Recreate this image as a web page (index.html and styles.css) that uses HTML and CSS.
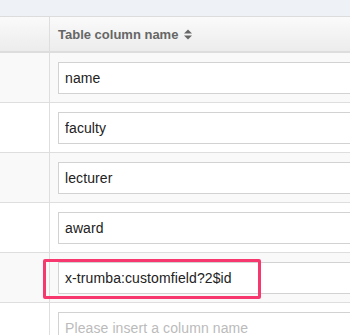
FILE: index.html
```html
<!DOCTYPE html>
<html lang="en">
<head>
  <meta charset="UTF-8">
  <meta name="viewport" content="width=device-width, initial-scale=1.0">
  <title>Column mapping</title>
  <link rel="stylesheet" href="styles.css">
</head>
<body>
  <div class="topbar"></div>
  <div class="wrap">
    <table class="mapping">
      <thead>
        <tr>
          <th class="col-index"></th>
          <th class="col-name">Table column name
            <svg class="sort" width="8" height="11" viewBox="0 0 8 11"><path d="M0 4.6 L4 0.6 L8 4.6 Z M0 6.4 L8 6.4 L4 10.4 Z" fill="#666"/></svg>
          </th>
        </tr>
      </thead>
      <tbody>
        <tr><td></td><td><input type="text" value="name"></td></tr>
        <tr><td></td><td><input type="text" value="faculty"></td></tr>
        <tr><td></td><td><input type="text" value="lecturer"></td></tr>
        <tr><td></td><td><input type="text" value="award"></td></tr>
        <tr><td></td><td><input type="text" value="x-trumba:customfield?2$id"></td></tr>
        <tr><td></td><td><input type="text" placeholder="Please insert a column name"></td></tr>
      </tbody>
    </table>
    <!-- highlight annotation -->
    <div class="highlight"></div>
  </div>
</body>
</html>
```

FILE: styles.css
```css
body {
  margin: 0;
  font-family: "Liberation Sans", Arial, sans-serif;
  background: #fff;
  overflow: hidden;
  width: 350px;
  height: 335px;
}

.topbar {
  height: 16px;
  background: #eef1f6;
  border-bottom: 1px solid #dcdcdc;
}

.wrap {
  position: relative;
}

.mapping {
  border-collapse: collapse;
  width: 520px;
}

.mapping th {
  height: 34px;
  padding: 0 8px;
  text-align: left;
  font-size: 13px;
  font-weight: bold;
  color: #666;
  background: linear-gradient(#fafafa, #ececec);
  border-bottom: 2px solid #dddddd;
}

.mapping .col-index {
  width: 33px;
  border-right: 1px solid #dedede;
}

.sort {
  vertical-align: -1px;
  margin-left: 2px;
}

.mapping td {
  padding: 9px 8px 8px;
  border-bottom: 1px solid #dedede;
}

.mapping td:first-child {
  border-right: 1px solid #dedede;
}

.mapping tbody tr:nth-child(odd) {
  background: #f9f9f9;
}

.mapping input {
  display: block;
  box-sizing: border-box;
  width: 100%;
  height: 32px;
  margin: 0;
  padding: 0 6px;
  font-family: "Liberation Sans", Arial, sans-serif;
  font-size: 14px;
  letter-spacing: 0.1px;
  color: #222;
  background: #fff;
  border: 1px solid #d2d2d2;
  border-radius: 0;
  outline: none;
}

.mapping input::placeholder {
  color: #bbb;
}

.highlight {
  position: absolute;
  left: 43px;
  top: 242px;
  width: 218px;
  height: 40px;
  box-sizing: border-box;
  border: 3px solid #f7386f;
  border-radius: 2px;
}
```
